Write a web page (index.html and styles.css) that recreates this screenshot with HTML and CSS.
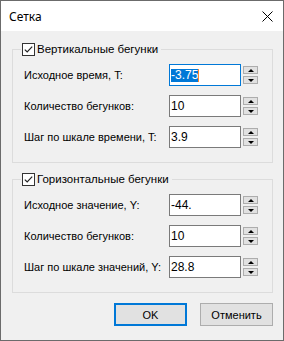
FILE: index.html
```html
<!DOCTYPE html>
<html lang="ru">

<head>
    <meta charset="UTF-8">
    <title>Сетка</title>
    <link rel="stylesheet" href="styles.css">
</head>

<body>
    <div class="window">
        <div class="titlebar">
            <span class="title">Сетка</span>
            <svg class="close" width="11" height="11" viewBox="0 0 11 11">
                <path d="M0.5 0.5 L10.5 10.5 M10.5 0.5 L0.5 10.5" stroke="#000" stroke-width="1" fill="none" />
            </svg>
        </div>

        <div class="content">
            <!-- Вертикальные бегунки -->
            <fieldset class="group">
                <legend>
                    <span class="check">
                        <svg width="11" height="11" viewBox="0 0 11 11">
                            <path d="M1.8 5.6 L4.2 8 L9.2 2.6" stroke="#222" stroke-width="1.2" fill="none" />
                        </svg>
                    </span>
                    <span class="caption">Вертикальные бегунки</span>
                </legend>

                <div class="row">
                    <label>Исходное время, T:</label>
                    <div class="field focused"><span class="selected">-3.75</span><span class="caret"></span></div>
                    <div class="spin"><span class="up"></span><span class="down"></span></div>
                </div>
                <div class="row">
                    <label>Количество бегунков:</label>
                    <div class="field">10</div>
                    <div class="spin"><span class="up"></span><span class="down"></span></div>
                </div>
                <div class="row">
                    <label>Шаг по шкале времени, T:</label>
                    <div class="field">3.9</div>
                    <div class="spin"><span class="up"></span><span class="down"></span></div>
                </div>
            </fieldset>

            <!-- Горизонтальные бегунки -->
            <fieldset class="group">
                <legend>
                    <span class="check">
                        <svg width="11" height="11" viewBox="0 0 11 11">
                            <path d="M1.8 5.6 L4.2 8 L9.2 2.6" stroke="#222" stroke-width="1.2" fill="none" />
                        </svg>
                    </span>
                    <span class="caption">Горизонтальные бегунки</span>
                </legend>

                <div class="row">
                    <label>Исходное значение, Y:</label>
                    <div class="field">-44.</div>
                    <div class="spin"><span class="up"></span><span class="down"></span></div>
                </div>
                <div class="row">
                    <label>Количество бегунков:</label>
                    <div class="field">10</div>
                    <div class="spin"><span class="up"></span><span class="down"></span></div>
                </div>
                <div class="row">
                    <label>Шаг по шкале значений, Y:</label>
                    <div class="field">28.8</div>
                    <div class="spin"><span class="up"></span><span class="down"></span></div>
                </div>
            </fieldset>

            <div class="buttons">
                <button class="btn default">OK</button>
                <button class="btn">Отменить</button>
            </div>
        </div>
    </div>
</body>

</html>
```

FILE: styles.css
```css
body {
    margin: 0;
    font-family: "Liberation Sans", Arial, sans-serif;
    font-size: 11px;
    color: #000;
}

.window {
    width: 284px;
    height: 341px;
    box-sizing: border-box;
    border: 1px solid #6b6b6b;
    background-color: #f0f0f0;
    display: flex;
    flex-direction: column;
}

.titlebar {
    height: 30px;
    background-color: #fff;
    display: flex;
    align-items: center;
    justify-content: space-between;
    padding: 0 10px 0 8px;
}

.title {
    font-family: "Noto Sans", sans-serif;
    font-size: 12px;
    margin-top: 1px;
}

.close {
    display: block;
    margin-top: 1px;
}

.content {
    padding: 11px 10px 0 11px;
}

.group {
    margin: 0 0 9px 0;
    padding: 7px 14px 14px 11px;
    border: 1px solid #dcdcdc;
    display: flex;
    flex-direction: column;
    gap: 9px;
}

legend {
    margin-left: -3px;
    padding: 0 3px 0 1px;
    height: 15px;
    line-height: 15px;
    display: flex;
    align-items: center;
    gap: 2px;
}

.caption {
    font-size: 11.5px;
}

.check {
    width: 11px;
    height: 11px;
    border: 1px solid #333;
    background-color: #fff;
    display: block;
}

.check svg {
    display: block;
}

.row {
    display: grid;
    grid-template-columns: 1fr 72px 15px;
    column-gap: 2px;
    align-items: center;
    height: 22px;
}

.field {
    height: 22px;
    box-sizing: border-box;
    border: 1px solid #7a7a7a;
    background-color: #fff;
    padding-left: 1px;
    display: flex;
    align-items: center;
    font-size: 12px;
}

.field.focused {
    border-color: #0078d7;
}

.selected {
    background-color: #0078d7;
    color: #fff;
    line-height: 13px;
}

.caret {
    width: 1px;
    height: 13px;
    background-color: #ff8728;
}

.spin {
    display: flex;
    flex-direction: column;
    gap: 2px;
}

.spin span {
    height: 8px;
    box-sizing: border-box;
    border: 1px solid #adadad;
    background-color: #e1e1e1;
    display: flex;
    align-items: center;
    justify-content: center;
}

.spin .up::after {
    content: "";
    border-left: 3px solid transparent;
    border-right: 3px solid transparent;
    border-bottom: 3px solid #000;
}

.spin .down::after {
    content: "";
    border-left: 3px solid transparent;
    border-right: 3px solid transparent;
    border-top: 3px solid #000;
}

.buttons {
    display: flex;
    justify-content: flex-end;
    gap: 13px;
    padding-top: 1px;
}

.btn {
    width: 73px;
    height: 23px;
    box-sizing: border-box;
    border: 1px solid #adadad;
    background-color: #e1e1e1;
    font-family: "Liberation Sans", Arial, sans-serif;
    font-size: 11px;
    color: #000;
    padding: 0;
}

.btn.default {
    border: 2px solid #0078d7;
}
```
